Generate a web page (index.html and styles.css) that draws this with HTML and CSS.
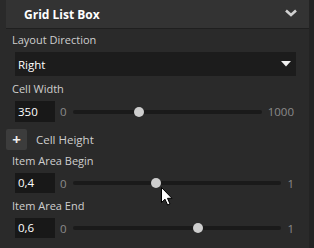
FILE: index.html
```html
<!DOCTYPE html>
<html lang="en">
<head>
<meta charset="UTF-8" />
<title>Grid List Box</title>
<link rel="stylesheet" href="styles.css">
</head>
<body>

<div class="panel">
  <div class="header">
    <span class="title">Grid List Box</span>
    <svg class="chevron" width="12" height="8" viewBox="0 0 12 8"><path d="M1 1.5 L6 6 L11 1.5" fill="none" stroke="#d0d0d0" stroke-width="2.6"/></svg>
  </div>

  <div class="label first">Layout Direction</div>
  <div class="select">
    <span>Right</span>
    <svg width="10" height="6" viewBox="0 0 10 6"><path d="M0 0 H10 L5 5.5 Z" fill="#f0f0f0"/></svg>
  </div>

  <div class="label">Cell Width</div>
  <div class="slider-row">
    <div class="num">350</div>
    <span class="lim">0</span>
    <div class="track"><div class="knob" style="left: 35%"></div></div>
    <span class="lim">1000</span>
  </div>

  <div class="add-row">
    <div class="plus">+</div>
    <span>Cell Height</span>
  </div>

  <div class="label tight">Item Area Begin</div>
  <div class="slider-row small">
    <div class="num">0,4</div>
    <span class="lim">0</span>
    <div class="track"><div class="knob" style="left: 40%"></div></div>
    <span class="lim">1</span>
  </div>

  <div class="label">Item Area End</div>
  <div class="slider-row small">
    <div class="num">0,6</div>
    <span class="lim">0</span>
    <div class="track"><div class="knob" style="left: 60%"></div></div>
    <span class="lim">1</span>
  </div>
</div>

<svg class="cursor" width="13" height="19" viewBox="0 0 13 19"><path d="M0.5 0.5 L0.5 15.5 L4 12.2 L6.6 18 L9 17 L6.5 11.3 L11 11.3 Z" fill="#fff" stroke="#000" stroke-width="1"/></svg>

</body>
</html>
```

FILE: styles.css
```css
body { margin: 0; background: #232323; font-family: "Open Sans", "Noto Sans", sans-serif; font-size: 11px; color: #cfcfcf; width: 314px; height: 248px; overflow: hidden; position: relative; }
.panel { width: 309px; height: 248px; background: #2a2a2a; display: flex; flex-direction: column; }
.header { margin-left: 6px; height: 28px; background: #333; border-bottom: 1px solid #1f1f1f; display: flex; align-items: center; justify-content: space-between; padding: 0 12px 0 18px; }
.title { font-weight: bold; font-size: 12px; color: #fff; }
.chevron { margin-top: -2px; }
.label { margin: 5px 0 0 12px; line-height: 16px; }
.label.first { margin-top: 3px; }
.label.tight { margin-top: 3px; }
.select { margin: 4px 13px 0 15px; height: 24px; background: #1c1c1c; display: flex; align-items: center; justify-content: space-between; padding: 0 5px 0 3px; color: #fff; font-size: 11.5px; }
.slider-row { margin: 4px 15px 0 15px; display: flex; align-items: center; gap: 5px; }
.num { width: 37px; height: 21px; background: #181818; color: #fff; line-height: 21px; padding-left: 3px; font-size: 11.5px; }
.slider-row.small .num { height: 20px; line-height: 20px; }
.lim { color: #8a8a8a; font-size: 11.5px; }
.track { flex: 1; height: 4px; background: #1a1a1a; position: relative; border-radius: 2px; margin: 0 1px; }
.knob { position: absolute; top: -3px; width: 10px; height: 10px; margin-left: -5px; border-radius: 50%; background: #cdcdcd; }
.add-row { margin: 7px 0 0 6px; display: flex; align-items: center; gap: 9px; }
.plus { width: 21px; height: 21px; background: #3c3c3c; border-radius: 2px; color: #eee; text-align: center; line-height: 20px; font-size: 15px; font-weight: bold; }
.add-row span { font-size: 11.5px; }
.cursor { position: absolute; left: 161px; top: 187px; }
```
